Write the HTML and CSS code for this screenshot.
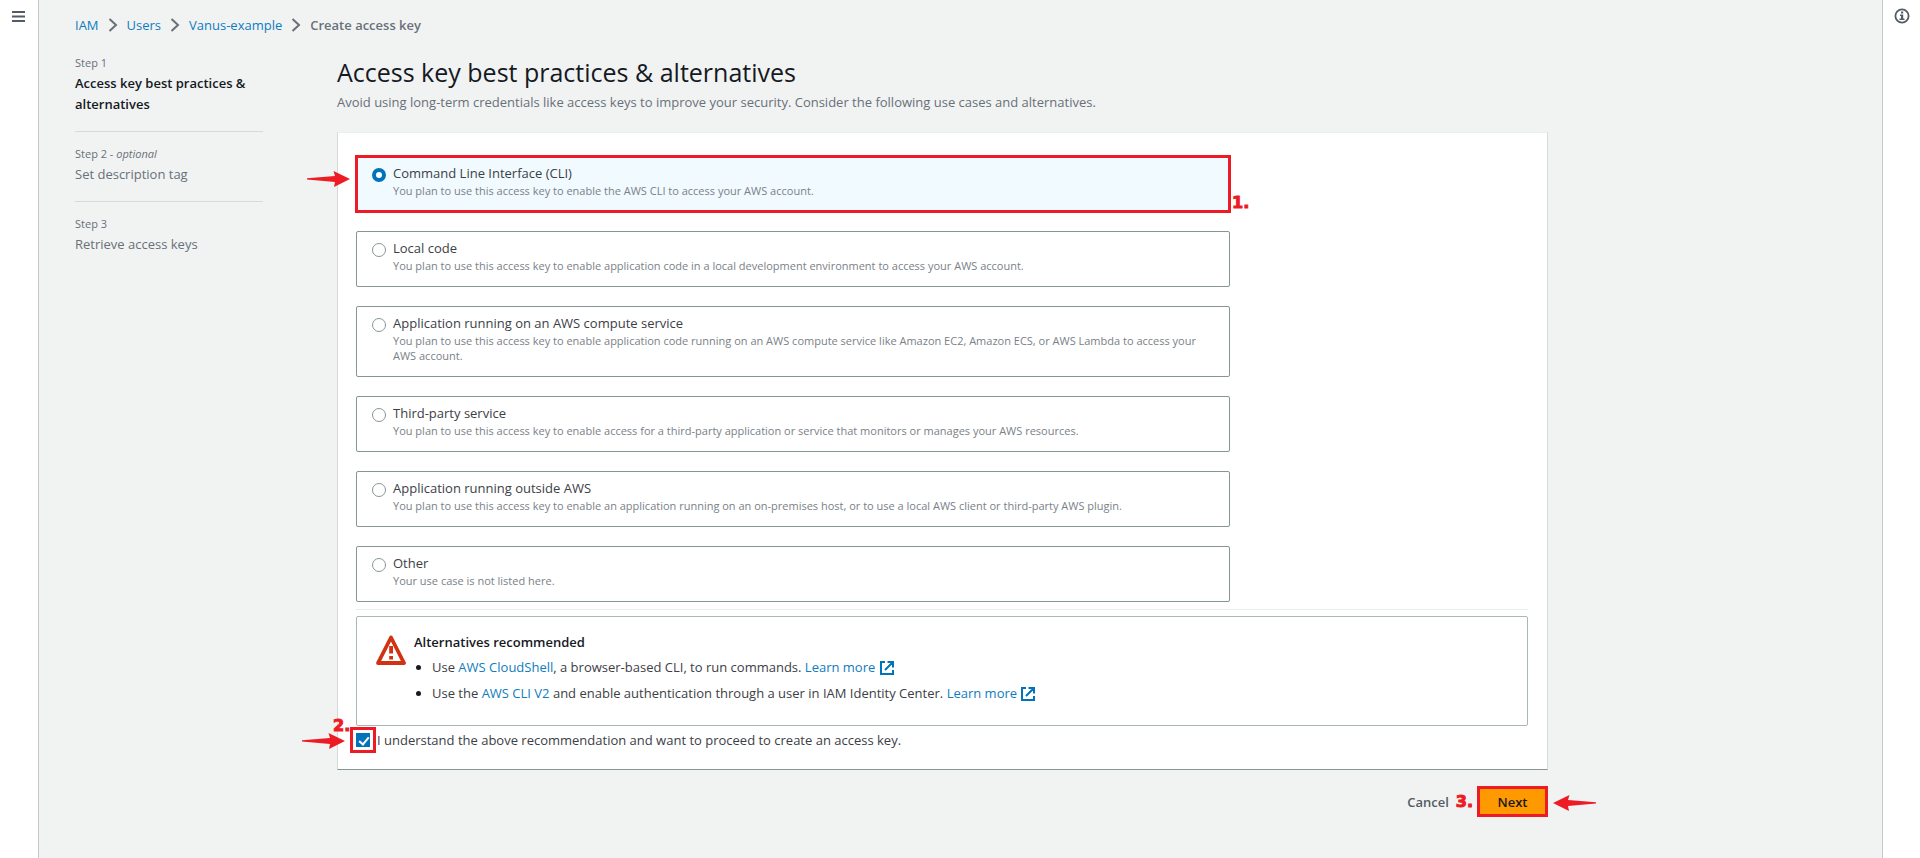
FILE: index.html
```html
<!DOCTYPE html>
<html lang="en">
<head>
<meta charset="utf-8">
<title>Create access key</title>
<link rel="stylesheet" href="styles.css">
</head>
<body>
<div class="shell">
  <aside class="rail">
    <button class="rail-button" type="button" aria-label="Open navigation">
      <svg width="14" height="14" viewBox="0 0 14 14" fill="none" stroke="#545b64" stroke-width="2"><path d="M0 2h13M0 6.5h13M0 11h13"/></svg>
    </button>
  </aside>
  <div class="page">
    <nav class="breadcrumbs" aria-label="Breadcrumbs">
      <a href="#">IAM</a>
      <svg class="chevron" viewBox="0 0 10 14"><path d="M1.5 1l6.5 6-6.5 6"/></svg>
      <a href="#">Users</a>
      <svg class="chevron" viewBox="0 0 10 14"><path d="M1.5 1l6.5 6-6.5 6"/></svg>
      <a href="#">Vanus-example</a>
      <svg class="chevron" viewBox="0 0 10 14"><path d="M1.5 1l6.5 6-6.5 6"/></svg>
      <span class="crumb-current">Create access key</span>
    </nav>
    <div class="wizard">
      <ol class="steps">
        <li class="step step-active"><span class="step-no">Step 1</span><span class="step-name">Access key best practices &amp; alternatives</span></li>
        <li class="step"><span class="step-no">Step 2 - <em>optional</em></span><span class="step-name">Set description tag</span></li>
        <li class="step"><span class="step-no">Step 3</span><span class="step-name">Retrieve access keys</span></li>
      </ol>
      <main class="content">
        <h1 class="title">Access key best practices &amp; alternatives</h1>
        <p class="subtitle">Avoid using long-term credentials like access keys to improve your security. Consider the following use cases and alternatives.</p>
        <section class="panel">
          <div class="tiles">
            <label class="tile tile-selected">
              <input class="radio" type="radio" name="usecase" checked>
              <span class="tile-label">Command Line Interface (CLI)</span>
              <span class="tile-text">You plan to use this access key to enable the AWS CLI to access your AWS account.</span>
              <svg class="arrow arrow-one" viewBox="0 0 43 16"><path d="M0 7.2L28 5 26.5 0 43 8 27 16l1-5L0 8.4z"/></svg>
              <span class="mark mark-one">1.</span>
            </label>
            <label class="tile">
              <input class="radio" type="radio" name="usecase">
              <span class="tile-label">Local code</span>
              <span class="tile-text">You plan to use this access key to enable application code in a local development environment to access your AWS account.</span>
            </label>
            <label class="tile">
              <input class="radio" type="radio" name="usecase">
              <span class="tile-label">Application running on an AWS compute service</span>
              <span class="tile-text">You plan to use this access key to enable application code running on an AWS compute service like Amazon EC2, Amazon ECS, or AWS Lambda to access your AWS account.</span>
            </label>
            <label class="tile">
              <input class="radio" type="radio" name="usecase">
              <span class="tile-label">Third-party service</span>
              <span class="tile-text">You plan to use this access key to enable access for a third-party application or service that monitors or manages your AWS resources.</span>
            </label>
            <label class="tile">
              <input class="radio" type="radio" name="usecase">
              <span class="tile-label">Application running outside AWS</span>
              <span class="tile-text">You plan to use this access key to enable an application running on an on-premises host, or to use a local AWS client or third-party AWS plugin.</span>
            </label>
            <label class="tile">
              <input class="radio" type="radio" name="usecase">
              <span class="tile-label">Other</span>
              <span class="tile-text">Your use case is not listed here.</span>
            </label>
          </div>
          <hr class="divider">
          <div class="alert">
            <svg class="alert-icon" viewBox="0 0 30 30"><path d="M15 2.500L28 28H2z" fill="none" stroke="#d13212" stroke-width="3.800" stroke-linejoin="round"/><path d="M13.200 11h3.800v7.500h-3.800zM13.200 21h3.800v3.500h-3.800z" fill="#d13212"/></svg>
            <div class="alert-body">
              <h2 class="alert-title">Alternatives recommended</h2>
              <ul class="alert-list">
                <li>Use <a href="#">AWS CloudShell</a>, a browser-based CLI, to run commands. <a href="#">Learn more <svg class="external" viewBox="0 0 14 14"><path d="M5 1H1v12h12V9M7.5 1H13v5.500M12.500 1.500L5 9"/></svg></a></li>
                <li>Use the <a href="#">AWS CLI V2</a> and enable authentication through a user in IAM Identity Center. <a href="#">Learn more <svg class="external" viewBox="0 0 14 14"><path d="M5 1H1v12h12V9M7.5 1H13v5.500M12.500 1.500L5 9"/></svg></a></li>
              </ul>
            </div>
          </div>
          <label class="consent">
            <input class="checkbox" type="checkbox" checked>
            <span>I understand the above recommendation and want to proceed to create an access key.</span>
            <svg class="arrow arrow-two" viewBox="0 0 43 16"><path d="M0 7.2L28 5 26.5 0 43 8 27 16l1-5L0 8.4z"/></svg>
            <span class="mark mark-two">2.</span>
          </label>
        </section>
        <div class="actions">
          <button class="cancel" type="button">Cancel</button>
          <span class="mark">3.</span>
          <button class="next" type="button">Next</button>
          <svg class="arrow arrow-three" viewBox="0 0 43 16"><path d="M43 7.2L15 5 16.500 0 0 8l16 8-1-5 28-2.600z"/></svg>
        </div>
      </main>
    </div>
  </div>
  <aside class="rail rail-right">
    <button class="rail-button" type="button" aria-label="Open info panel">
      <svg width="16" height="16" viewBox="0 0 16 16"><circle cx="8" cy="8" r="6.600" fill="none" stroke="#545b64" stroke-width="1.800"/><path d="M7 3.500h2.200v2H7zM6 6.500h3.200v4H10.500v1.500H5.500v-1.500H7V8H6z" fill="#545b64"/></svg>
    </button>
  </aside>
</div>
</body>
</html>
```
FILE: styles.css
```css
* { box-sizing: border-box; }
body {
  margin: 0;
  background: #f1f3f3;
  color: #3c4046;
  font: 13px/20px "Open Sans", "Noto Sans", sans-serif;
}
a { color: #0f7cc0; text-decoration: none; }
button { font: inherit; border: 0; background: none; padding: 0; cursor: pointer; }
.shell { display: flex; min-height: 100vh; }
.rail { flex: none; width: 39px; background: #fff; border-right: 1px solid #c3c8ca; padding: 10px 0 0 12px; }
.rail-right { width: 38px; border-right: 0; border-left: 1px solid #c3c8ca; padding: 8px 0 0 11px; }
.rail-button { display: block; }
.rail-button svg { display: block; }
.page { flex: 1; min-width: 0; padding: 15px 36px 0; }

.breadcrumbs { display: flex; align-items: center; gap: 9px; }
.chevron { width: 10px; height: 14px; fill: none; stroke: #687078; stroke-width: 2; }
.crumb-current { color: #687078; font-weight: 600; }

.wizard { display: grid; grid-template-columns: 188px minmax(0, 1211px); column-gap: 74px; }
.steps { list-style: none; margin: 0; padding: 18px 0 0; color: #687078; }
.step { display: flex; flex-direction: column; padding-bottom: 16px; margin-bottom: 12px; border-bottom: 1px solid #d5dbdb; }
.step:last-child { border-bottom: 0; }
.step-no { font-size: 11px; line-height: 20px; }
.step-name { line-height: 21px; }
.step-active .step-name { color: #16191f; font-weight: 600; }

.title { margin: 19px 0 0; color: #16191f; font-size: 25px; line-height: 36px; font-weight: 400; }
.subtitle { margin: 2px 0 20px; color: #687078; }
.panel { background: #fff; padding: 23px 19px 19px 18px; border: 1px solid #d5dbdb; border-top-color: #eaeded; border-bottom-color: #879596; }

.tiles { display: flex; flex-direction: column; gap: 19px; max-width: 874px; }
.tile {
  position: relative;
  display: grid;
  grid-template-columns: 14px 1fr;
  column-gap: 7px;
  row-gap: 1px;
  padding: 7px 15px 13px;
  border: 1px solid #879596;
  border-radius: 2px;
  background: #fff;
}
.tile-selected { background: #f1faff; border-color: #ed1c24; outline: 3px solid #ed1c24; outline-offset: -2px; border-radius: 0; }
.tile-label { line-height: 18px; }
.tile-text { grid-column: 2; color: #7a8188; font-size: 11px; line-height: 15px; }
.radio { appearance: none; width: 14px; height: 14px; margin: 0; align-self: end; border: 1px solid #879596; border-radius: 50%; background: #fff; }
.radio:checked { border: 4px solid #0073bb; }

.divider { border: 0; border-top: 1px solid #eaeded; margin: 7px 0 6px; }
.alert { display: flex; gap: 8px; border: 1px solid #aab7b8; border-radius: 2px; padding: 15px 19px 19px; }
.alert-icon { flex: none; width: 30px; height: 30px; margin-top: 3px; }
.alert-title { margin: 0 0 2px; color: #16191f; font-size: 13px; line-height: 20px; font-weight: 600; }
.alert-list { margin: 0; padding-left: 18px; line-height: 26px; }
.alert-list li::marker { color: #16191f; }
.external { width: 14px; height: 14px; margin-left: 1px; vertical-align: -3px; fill: none; stroke: #0073bb; stroke-width: 2; }

.consent { position: relative; display: flex; width: fit-content; align-items: center; gap: 7px; margin-top: 4px; }
.checkbox { appearance: none; position: relative; width: 14px; height: 14px; margin: 0; background: #fff; border: 1px solid #879596; outline: 3px solid #ed1c24; outline-offset: 3px; }
.checkbox:checked { background: #0073bb; border-color: #0073bb; }
.checkbox:checked::after { content: ""; position: absolute; left: 4px; top: 1px; width: 4px; height: 8px; border: solid #fff; border-width: 0 2px 2px 0; transform: rotate(40deg); }

.actions { position: relative; display: flex; justify-content: flex-end; align-items: center; margin-top: 16px; }
.cancel { color: #545b64; font-weight: 600; margin-right: 7px; }
.next { margin-left: 4px; width: 71px; height: 31px; border: 3px solid #ed1c24; background: #ff9900; color: #16191f; font-weight: 600; }

.mark { color: #ed1c24; font: bold 16px/16px "DejaVu Sans", sans-serif; -webkit-text-stroke: 1px #ed1c24; }
.mark-one { position: absolute; left: 100%; bottom: 0; margin-left: 3px; }
.mark-two { position: absolute; left: -23px; bottom: 16px; }
.arrow { position: absolute; width: 43px; height: 16px; fill: #ed1c24; }
.arrow-one { left: -50px; top: 14px; }
.arrow-two { left: -54px; top: 3px; }
.arrow-three { left: 100%; top: 9px; margin-left: 5px; }
```
